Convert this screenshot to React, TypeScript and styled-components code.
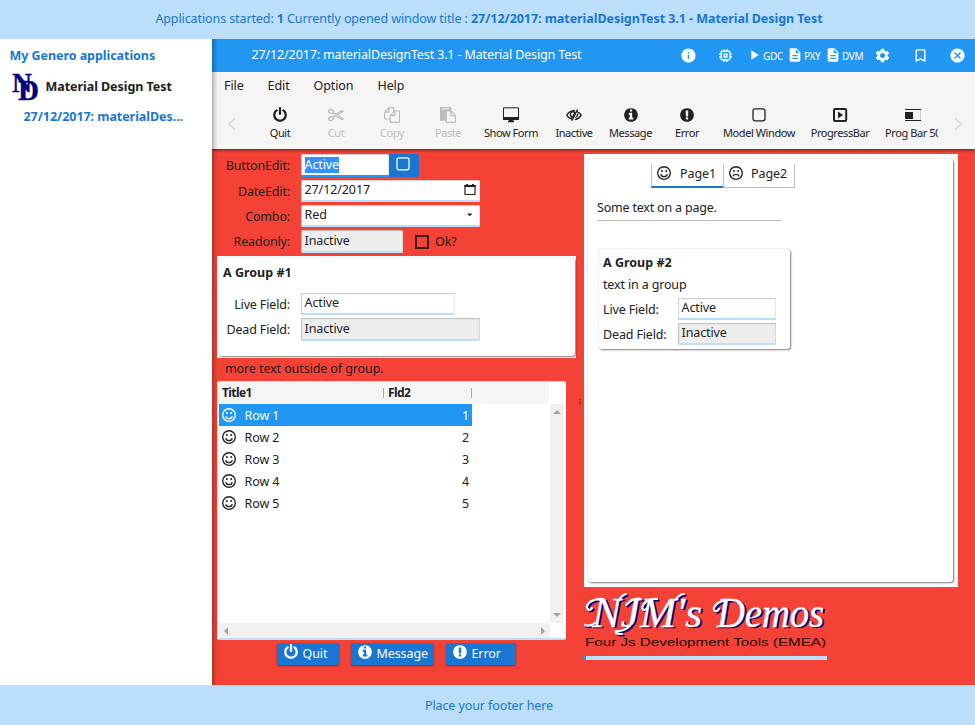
import React from 'react';
import styled, { createGlobalStyle } from 'styled-components';
import {
  MdInfo,
  MdMemory,
  MdPlayArrow,
  MdDescription,
  MdSettings,
  MdBookmarkBorder,
  MdCancel,
} from 'react-icons/md';

const GlobalStyle = createGlobalStyle`
  * { box-sizing: border-box; }
  body {
    margin: 0;
    font: 12.5px/20px "Noto Sans", sans-serif;
    letter-spacing: -0.1px;
    color: #212121;
    overflow: hidden;
  }
  svg { display: block; flex: none; overflow: visible; }
`;

const Page = styled.div`
  display: grid;
  grid-template: 39px 646px 40px / 212px 1fr;
  width: 975px;
  height: 725px;
  background: #fff;
`;

const Banner = styled.div<{ $foot?: boolean }>`
  grid-column: 1 / -1;
  display: flex;
  align-items: center;
  justify-content: center;
  padding: ${(p) => (p.$foot ? '1px 0 0 3px' : '0 0 1px 3px')};
  background: #bbdefb;
  color: #1976d2;
  white-space: pre;
  b { letter-spacing: -0.05px; }
`;

const Sidebar = styled.aside`
  padding: 7px 9.5px;
  color: #1976d2;
  font-weight: 700;
  letter-spacing: -0.05px;
  white-space: nowrap;
`;

const AppEntry = styled.div`
  display: flex;
  align-items: center;
  gap: 6px;
  height: 30px;
  margin: 6px 0 5px 2px;
  color: #212121;
`;

const AppWindow = styled.div`
  padding-left: 14px;
`;

const Main = styled.main`
  display: flex;
  flex-direction: column;
  min-width: 0;
  position: relative;
  &::before {
    content: '';
    position: absolute;
    z-index: 2;
    inset: 0 auto 0 0;
    width: 6px;
    background: linear-gradient(to right, rgba(0, 0, 0, 0.27), rgba(0, 0, 0, 0.1) 55%, transparent);
  }
`;

const TitleBar = styled.header`
  display: flex;
  align-items: center;
  height: 33px;
  flex: none;
  padding-left: 39.5px;
  background: #2196f3;
  color: #fff;
`;

const WindowTitle = styled.div`
  flex: none;
  width: 418px;
  padding-bottom: 1px;
  letter-spacing: -0.13px;
`;

const TitleAction = styled.div<{ $w: number }>`
  display: flex;
  flex: none;
  align-items: center;
  justify-content: center;
  width: ${(p) => p.$w}px;
  padding-bottom: 1px;
`;

const LogLinks = styled.div`
  display: flex;
  flex: none;
  width: 120px;
  padding-left: 2px;
`;

const LogLink = styled.div<{ $w: number }>`
  display: flex;
  align-items: center;
  gap: 1px;
  width: ${(p) => p.$w}px;
  font-size: 10px;
  letter-spacing: -0.4px;
  svg { margin-bottom: 1px; }
  span { padding-top: 1px; }
`;

const MenuBar = styled.nav`
  display: flex;
  gap: 24px;
  height: 28px;
  flex: none;
  padding: 4px 12px;
  position: relative;
  z-index: 1;
  background: #f5f5f5;
`;

const ToolBar = styled.div`
  position: relative;
  z-index: 1;
  display: flex;
  height: 49px;
  flex: none;
  background: #f5f5f5;
  box-shadow: 0 1px 3px rgba(0, 0, 0, 0.65);
  clip-path: inset(0 0 -6px 0);
`;

const Scroller = styled.div<{ $end?: boolean }>`
  display: flex;
  align-items: center;
  justify-content: center;
  width: ${(p) => (p.$end ? 37 : 40)}px;
  padding: 0 0 1px ${(p) => (p.$end ? 3 : 0)}px;
  flex: none;
  color: #dcdcdc;
`;

const Tools = styled.div`
  display: flex;
  flex: none;
  width: 686px;
  overflow: hidden;
`;

const Tool = styled.div<{ $w: number; $off?: boolean }>`
  display: flex;
  flex: none;
  flex-direction: column;
  align-items: center;
  width: ${(p) => p.$w}px;
  padding-top: 7px;
  font-size: 11px;
  line-height: 16px;
  letter-spacing: -0.42px;
  white-space: nowrap;
  color: ${(p) => (p.$off ? '#bdbdbd' : '#212121')};
  span { padding-top: 2px; }
`;

const Content = styled.section`
  display: grid;
  grid-template-columns: 359px 8px 374px;
  flex: 1;
  min-height: 0;
  padding: 5px 0 0 5px;
  background: #f44336;
`;

const Column = styled.div`
  display: flex;
  flex-direction: column;
  min-width: 0;
`;

const FormGrid = styled.div<{ $label: number; $rows: string; $top?: number }>`
  display: grid;
  grid-template-columns: ${(p) => p.$label}px 1fr;
  grid-template-rows: ${(p) => p.$rows};
  column-gap: 11px;
  row-gap: 3px;
  margin-top: ${(p) => p.$top ?? 0}px;
`;

const Label = styled.label<{ $left?: boolean }>`
  text-align: ${(p) => (p.$left ? 'left' : 'right')};
  line-height: 23px;
  letter-spacing: -0.15px;
  white-space: nowrap;
`;

const FieldLine = styled.div`
  display: flex;
`;

const Field = styled.div<{ $w: number; $off?: boolean; $focus?: boolean }>`
  display: flex;
  align-items: center;
  justify-content: space-between;
  width: ${(p) => p.$w}px;
  padding: 0 4px 0 3.5px;
  border-radius: 1px;
  background: ${(p) => (p.$off ? '#eee' : '#fff')};
  border-bottom: 2px solid ${(p) => (p.$focus ? '#2196f3' : '#bbdefb')};
  box-shadow: inset 1px 1px 1px rgba(0, 0, 0, 0.2), inset -1px 0 1px rgba(0, 0, 0, 0.1);
`;

const Selected = styled.span`
  line-height: 16px;
  background: #3390ff;
  color: #fff;
`;

const FieldButton = styled.button`
  display: flex;
  justify-content: center;
  width: 30px;
  padding: 2px 2px 0 0;
  border: 0;
  border-radius: 0 2px 2px 0;
  background: #1976d2;
  color: #fff;
`;

const CheckLabel = styled.label`
  display: flex;
  align-items: center;
  gap: 7px;
  margin-left: 13px;
`;

const CheckBox = styled.span`
  width: 12px;
  height: 12px;
  outline: 2px solid #3b1a17;
  outline-offset: -1px;
`;

const GroupFrame = styled.div`
  height: 102px;
  margin-top: 3px;
  padding: 2px 1px 2px 2px;
  background: #fff;
`;

const Card = styled.div<{ $pad: string }>`
  height: 100%;
  padding: ${(p) => p.$pad};
  border-radius: 3px;
  background: #fff;
  box-shadow: 1px 1px 2px rgba(0, 0, 0, 0.5), 0 0 1px rgba(0, 0, 0, 0.3);
`;

const Heading = styled.div`
  font-weight: 700;
  letter-spacing: 0;
`;

const OutsideText = styled.div`
  height: 23px;
  padding: 1px 8px;
`;

const Table = styled.div`
  display: grid;
  grid-template: 21px 219px 15px / 331px 14px;
  width: 349px;
  height: 259px;
  padding: 2px;
  border-bottom: 2px solid #bbdefb;
  border-radius: 2px;
  background: #fff;
  box-shadow: inset 1px 1px 1px rgba(0, 0, 0, 0.14);
`;

const HeadRow = styled.div`
  display: flex;
  margin: -1px 1px 0 -1px;
  padding-left: 4px;
  background: #f5f5f5;
  font-size: 12px;
  font-weight: 700;
  letter-spacing: -0.6px;
`;

const HeadCell = styled.div<{ $w: number }>`
  display: flex;
  align-items: center;
  justify-content: space-between;
  width: ${(p) => p.$w}px;
  &::after {
    content: '';
    width: 1px;
    height: 10px;
    background: #aaa;
  }
`;

const HeadText = styled.span`
  padding-left: 4px;
`;

const Rows = styled.div`
  grid-row: 2;
`;

const Row = styled.div<{ $on?: boolean }>`
  display: flex;
  align-items: center;
  width: 253px;
  height: 22px;
  padding: 1px 3px 0;
  background: ${(p) => (p.$on ? '#2196f3' : 'transparent')};
  color: ${(p) => (p.$on ? '#fff' : '#212121')};
  span { flex: 1; padding-left: 7.5px; }
`;

const FaceSlot = styled.div`
  margin: -1px 0 0 -1px;
`;

const ScrollTrack = styled.div<{ $dir: 'row' | 'column' }>`
  display: flex;
  flex-direction: ${(p) => p.$dir};
  align-items: center;
  justify-content: space-between;
  grid-row: ${(p) => (p.$dir === 'column' ? 2 : 3)};
  padding: ${(p) => (p.$dir === 'column' ? '4px 0' : '0 3px 0 4px')};
  background: #f0f0f0;
`;

const Actions = styled.div`
  display: flex;
  gap: 12px;
  margin: 3px 0 0 60px;
`;

const Action = styled.button<{ $w: number }>`
  display: flex;
  gap: 3.5px;
  width: ${(p) => p.$w}px;
  height: 22px;
  padding: 2px 0 0 6px;
  border: 0;
  border-radius: 2px;
  background: #1976d2;
  color: #fff;
  font: inherit;
  letter-spacing: inherit;
  line-height: 18px;
  box-shadow: 0 1px 2px rgba(0, 0, 0, 0.4);
  svg { margin-top: -1px; }
`;

const Splitter = styled.div`
  display: flex;
  align-items: flex-start;
  justify-content: center;
  padding-top: 245px;
  &::after {
    content: '';
    width: 2px;
    height: 6px;
    background: repeating-linear-gradient(#a33 0 1px, #c93a30 1px 2px);
  }
`;

const PagePanel = styled.div`
  height: 433px;
  padding: 5px 5px 5px 4px;
  background: #fff;
`;

const Tabs = styled.div`
  display: flex;
  margin-left: 54px;
`;

const Tab = styled.div<{ $on?: boolean }>`
  display: flex;
  align-items: center;
  gap: ${(p) => (p.$on ? 8 : 7)}px;
  width: 72px;
  height: 24px;
  padding: 0 0 ${(p) => (p.$on ? 2 : 3)}px 4px;
  border: 1px solid #bdbdbd;
  border-width: 0 ${(p) => (p.$on ? 0 : 1)}px 1px 1px;
  ${(p) => p.$on && 'border-bottom: 2px solid #1976d2;'}
  svg { margin-top: -2px; }
`;

const PageText = styled.div`
  width: 185px;
  height: 25px;
  margin: 8px 0 28px;
  padding-top: 2px;
  border-bottom: 1px solid #bdbdbd;
  letter-spacing: -0.2px;
`;

const GroupBox = styled.div`
  width: 191px;
  height: 100px;
  margin-left: 2px;
`;

const GroupText = styled.div`
  height: 25px;
  padding-top: 2px;
  letter-spacing: -0.15px;
`;

const Brand = styled.div`
  width: 243px;
  margin-top: 3px;
`;

const BrandRule = styled.div`
  height: 4px;
  margin-top: 6px;
  border-left: 2px solid #2196f3;
  background: #bbdefb;
`;

const POWER =
  'M1664 896q0 156-61 298t-164 245-245 164-298 61-298-61-245-164-164-245-61-298q0-182 80.5-343t226.5-270q43-32 95.5-25t83.5 50q32 42 24.5 94.5t-49.5 84.5q-98 74-151.5 181t-53.5 228q0 104 40.5 198.5t109.5 163.5 163.5 109.5 198.5 40.5 198.5-40.5 163.5-109.5 109.5-163.5 40.5-198.5q0-121-53.5-228t-151.5-181q-42-32-49.5-84.5t24.5-94.5q31-43 84-50t95 25q146 109 226.5 270t80.5 343zm-640-768v640q0 52-38 90t-90 38-90-38-38-90v-640q0-52 38-90t90-38 90 38 38 90z';
const INFO =
  'M1152 1376v-160q0-14-9-23t-23-9h-96v-512q0-14-9-23t-23-9h-320q-14 0-23 9t-9 23v160q0 14 9 23t23 9h96v320h-96q-14 0-23 9t-9 23v160q0 14 9 23t23 9h448q14 0 23-9t9-23zm-128-896v-160q0-14-9-23t-23-9h-192q-14 0-23 9t-9 23v160q0 14 9 23t23 9h192q14 0 23-9t9-23zm640 416q0 209-103 385.5t-279.5 279.5-385.5 103-385.5-103-279.5-279.5-103-385.5 103-385.5 279.5-279.5 385.5-103 385.5 103 279.5 279.5 103 385.5z';
const ALERT =
  'M896 128q209 0 385.5 103t279.5 279.5 103 385.5-103 385.5-279.5 279.5-385.5 103-385.5-103-279.5-279.5-103-385.5 103-385.5 279.5-279.5 385.5-103zm128 1247v-190q0-14-9-23.5t-22-9.5h-192q-13 0-23 10t-10 23v190q0 13 10 23t23 10h192q13 0 22-9.5t9-23.5zm-2-344l18-621q0-12-10-18-10-8-24-8h-220q-14 0-24 8-10 6-10 18l17 621q0 10 10 17.5t24 7.5h185q14 0 23.5-7.5t10.5-17.5z';
const FILES =
  'M1696 384q40 0 68 28t28 68v1216q0 40-28 68t-68 28h-960q-40 0-68-28t-28-68v-288h-544q-40 0-68-28t-28-68v-672q0-40 20-88t48-76l408-408q28-28 76-48t88-20h416q40 0 68 28t28 68v328q68-40 128-40h416zm-544 213l-299 299h299v-299zm-640-384l-299 299h299v-299zm196 647l316-316v-416h-384v416q0 40-28 68t-68 28h-416v640h512v-256q0-40 20-88t48-76zm956 804v-1152h-384v416q0 40-28 68t-68 28h-416v640h896z';
const PASTE =
  'M768 1664h896v-640h-416q-40 0-68-28t-28-68v-416h-384v1152zm256-1440v-64q0-13-9.5-22.5t-22.5-9.5h-704q-13 0-22.5 9.5t-9.5 22.5v64q0 13 9.5 22.5t22.5 9.5h704q13 0 22.5-9.5t9.5-22.5zm256 672h299l-299-299v299zm512 128v672q0 40-28 68t-68 28h-960q-40 0-68-28t-28-68v-160h-544q-40 0-68-28t-28-68v-1344q0-40 28-68t68-28h1088q40 0 68 28t28 68v328q21 13 36 28l408 408q28 28 48 76t20 88z';

const Glyph = ({ d }: { d: string }) => (
  <svg width="16" height="16" viewBox="0 0 1792 1792" fill="currentColor"><path d={d} /></svg>
);

const Line = ({ children, w = 1.3 }: { children: React.ReactNode; w?: number }) => (
  <svg width="16" height="16" viewBox="0 0 16 16" fill="none" stroke="currentColor" strokeWidth={w}>{children}</svg>
);

const Scissors = () => (
  <Line w={1.1}>
    <ellipse cx="3" cy="4.4" rx="2.5" ry="1.8" transform="rotate(20 3 4.4)" strokeWidth="1.4" />
    <ellipse cx="3" cy="11.6" rx="2.5" ry="1.8" transform="rotate(-20 3 11.6)" strokeWidth="1.4" />
    <path d="M5 5.6 9 8l6.3-3.6-1.6-.7L5 8.9M5 10.4 7.5 9M9 8l6.3 3.9-1.6.7L7.8 9.2" />
  </Line>
);
const Screen = () => (
  <Line w={1}>
    <path d="M.5.8h15v10.7H.5z" />
    <path d="M0 10h16v3H0zM6 12h4l.5 2H5.500zM5 14h6v1.300H5z" fill="currentColor" stroke="none" />
  </Line>
);
const HiddenEye = () => (
  <Line w={1.4}>
    <path d="M6.200 12.300C3.500 11.600 1.700 10 .8 8.200 2.300 5.600 5 3.700 8 3.700h1M10.500 4.300c2 .7 3.700 2.100 4.700 3.900-1.300 2.300-3.500 3.900-6.200 4.400" />
    <path d="M11.500 2.500 5.800 13.700M5 5.200C4 8 4.500 9.500 6.500 10.500L9 5.500C7 4.200 6 4.500 5 5.200" />
    <path d="M11.800 6.500c.3 2-.7 3.500-2.300 4.200z" fill="currentColor" strokeWidth=".6" />
  </Line>
);
const Square = () => <Line><rect x="2" y="1.800" width="12" height="12" rx="2" /></Line>;
const BoxedPlay = () => (
  <Line w={2}><rect x="2" y="2" width="12.200" height="12" rx="1" /><path d="M6 4.500v7L11 8z" fill="currentColor" stroke="none" /></Line>
);
const Progress = () => (
  <svg width="16" height="16" fill="#212121">
    <path d="M0 2h16v1H0zM0 13h16v1H0zM0 5h8v7H0z" /><path d="M15 3h1v10h-1z" fill="#ccc" />
  </svg>
);
const Face = ({ sad }: { sad?: boolean }) => (
  <Line w={1.35}>
    <circle cx="8" cy="8" r="6.300" />
    <circle cx="5.900" cy="6.100" r="1" fill="currentColor" stroke="none" />
    <circle cx="10.100" cy="6.100" r="1" fill="currentColor" stroke="none" />
    <path d={sad ? 'M4.900 11.300c1.200-2.500 5-2.500 6.200 0' : 'M4.700 9.200c1 3.300 5.600 3.300 6.600 0'} />
  </Line>
);
const Calendar = () => (
  <svg width="12" height="12" fill="none" stroke="#212121"><path d="M1 1.500h10v9H1z" strokeWidth="1.200" /><path d="M.5 2h11M3 0v2M9 0v2" strokeWidth="1.800" /></svg>
);
const Arrow = ({ d, fill = '#a3a3a3' }: { d: string; fill?: string }) => (
  <svg width="8" height="8" fill={fill}><path d={d} /></svg>
);
const Chevron = ({ d }: { d: string }) => (
  <svg width="10" height="14" fill="none" stroke="currentColor" strokeWidth="2"><path d={d} /></svg>
);

const Monogram = () => (
  <svg width="28" height="30" fill="#000080" stroke="#000080" strokeWidth=".3" fontFamily="Liberation Serif, serif">
    <text x="0" y="20" fontSize="28" textLength="20" lengthAdjust="spacingAndGlyphs">N</text>
    <text x="6" y="28" fontSize="30" textLength="21" lengthAdjust="spacingAndGlyphs">D</text>
  </svg>
);

const Lettering = () => (
  <>
    <text x="8" y="36.500" textLength="110" lengthAdjust="spacingAndGlyphs">NJM's</text>
    <text x="133" y="36.500" textLength="107" lengthAdjust="spacingAndGlyphs">Demos</text>
    {/* pen flourishes around the capitals */}
    <g fill="none" strokeWidth="2.200" strokeLinecap="round">
      <path d="M19 9C10 8 2 13 3 18q2 4 5 0M1 35q5 2 10-2M35 10q3-5 7-6" />
      <path d="M57 9q-8-2-15 6M46 36q-7 6-14 5-2 3 6 3" />
      <path d="M73 9q-12-1-15 9 2 4 5 0M92 9q4-5 8-5" />
      <path d="M147 10c-10-1-18 5-17 10q2 3 5-1" />
    </g>
  </>
);

const BrandLogo = () => (
  <svg width="243" height="60">
    <g fontFamily="Liberation Serif, serif" fontStyle="italic" fontSize="43">
      <g fill="#000080" stroke="#000080" strokeWidth=".3" transform="translate(1.700 1.500)"><Lettering /></g>
      <g fill="#fff" stroke="#fff" strokeWidth=".3"><Lettering /></g>
    </g>
    <text x="1" y="55.500" fontFamily="Liberation Sans, sans-serif" fontSize="10.500" letterSpacing="0" fill="#210b08" textLength="241" lengthAdjust="spacingAndGlyphs">Four Js Development Tools (EMEA)</text>
  </svg>
);

const tools: { label: string; w: number; icon: React.ReactNode; off?: boolean }[] = [
  { label: 'Quit', w: 56, icon: <Glyph d={POWER} /> },
  { label: 'Cut', w: 56, icon: <Scissors />, off: true },
  { label: 'Copy', w: 56, icon: <Glyph d={FILES} />, off: true },
  { label: 'Paste', w: 56, icon: <Glyph d={PASTE} />, off: true },
  { label: 'Show Form', w: 70, icon: <Screen /> },
  { label: 'Inactive', w: 56, icon: <HiddenEye /> },
  { label: 'Message', w: 57, icon: <Glyph d={INFO} /> },
  { label: 'Error', w: 56, icon: <Glyph d={ALERT} /> },
  { label: 'Model Window', w: 88, icon: <Square /> },
  { label: 'ProgressBar', w: 74, icon: <BoxedPlay /> },
  { label: 'Prog Bar 50', w: 72, icon: <Progress /> },
];

const title = '27/12/2017: materialDesignTest 3.1 - Material Design Test';

export default function App() {
  return (
    <Page>
      <GlobalStyle />
      <Banner>Applications started: <b>1</b> Currently opened window title : <b>{title}</b></Banner>
      <Sidebar>
        <div>My Genero applications</div>
        <AppEntry><Monogram />Material Design Test</AppEntry>
        <AppWindow>27/12/2017: materialDes...</AppWindow>
      </Sidebar>
      <Main>
        <TitleBar>
          <WindowTitle>{title}</WindowTitle>
          <TitleAction $w={37}><MdInfo size={17} /></TitleAction>
          <TitleAction $w={37.5}><MdMemory size={17} /></TitleAction>
          <LogLinks>
            <LogLink $w={41}><MdPlayArrow size={16} /><span>GDC</span></LogLink>
            <LogLink $w={38}><MdDescription size={16} /><span>PXY</span></LogLink>
            <LogLink $w={38}><MdDescription size={16} /><span>DVM</span></LogLink>
          </LogLinks>
          <TitleAction $w={37.5}><MdSettings size={17} /></TitleAction>
          <TitleAction $w={38}><MdBookmarkBorder size={17} /></TitleAction>
          <TitleAction $w={36.5}><MdCancel size={17} /></TitleAction>
        </TitleBar>
        <MenuBar><span>File</span><span>Edit</span><span>Option</span><span>Help</span></MenuBar>
        <ToolBar>
          <Scroller><Chevron d="M8 1 2 7l6 6" /></Scroller>
          <Tools>
            {tools.map((t) => (
              <Tool key={t.label} $w={t.w} $off={t.off}>{t.icon}<span>{t.label}</span></Tool>
            ))}
          </Tools>
          <Scroller $end><Chevron d="M2 1l6 6-6 6" /></Scroller>
        </ToolBar>
        <Content>
          <Column>
            <FormGrid $label={73} $rows="23px 22px 22px 23px">
              <Label>ButtonEdit:</Label>
              <FieldLine>
                <Field $w={88} $focus><Selected>Active</Selected></Field>
                <FieldButton><Square /></FieldButton>
              </FieldLine>
              <Label>DateEdit:</Label>
              <Field $w={179}>27/12/2017<Calendar /></Field>
              <Label>Combo:</Label>
              <Field $w={179}>Red<Arrow d="M-1 2.500h5.500L1.750 5.300z" fill="#212121" /></Field>
              <Label>Readonly:</Label>
              <FieldLine>
                <Field $w={102} $off>Inactive</Field>
                <CheckLabel><CheckBox />Ok?</CheckLabel>
              </FieldLine>
            </FormGrid>
            <GroupFrame>
              <Card $pad="5px 0 0 4px">
                <Heading>A Group #1</Heading>
                <FormGrid $label={67} $rows="22px 23px" $top={10}>
                  <Label>Live Field:</Label>
                  <Field $w={154}>Active</Field>
                  <Label>Dead Field:</Label>
                  <Field $w={179} $off>Inactive</Field>
                </FormGrid>
              </Card>
            </GroupFrame>
            <OutsideText>more text outside of group.</OutsideText>
            <Table>
              <HeadRow><HeadCell $w={162}>Title1</HeadCell><HeadCell $w={88}><HeadText>Fld2</HeadText></HeadCell></HeadRow>
              <Rows>
                {[1, 2, 3, 4, 5].map((n) => (
                  <Row key={n} $on={n === 1}><FaceSlot><Face /></FaceSlot><span>Row {n}</span>{n}</Row>
                ))}
              </Rows>
              <ScrollTrack $dir="column"><Arrow d="M0 6 4 2l4 4z" /><Arrow d="M0 2h8L4 6z" /></ScrollTrack>
              <ScrollTrack $dir="row"><Arrow d="M5 0v8L1 4z" /><Arrow d="M2 0v8l4-4z" /></ScrollTrack>
            </Table>
            <Actions>
              <Action $w={62}><Glyph d={POWER} />Quit</Action>
              <Action $w={83}><Glyph d={INFO} />Message</Action>
              <Action $w={70}><Glyph d={ALERT} />Error</Action>
            </Actions>
          </Column>
          <Splitter />
          <Column>
            <PagePanel>
              <Card $pad="5px 9px">
                <Tabs>
                  <Tab $on><Face />Page1</Tab>
                  <Tab><Face sad />Page2</Tab>
                </Tabs>
                <PageText>Some text on a page.</PageText>
                <GroupBox>
                  <Card $pad="4px 4px">
                    <Heading>A Group #2</Heading>
                    <GroupText>text in a group</GroupText>
                    <FormGrid $label={64} $rows="22px 22px">
                      <Label $left>Live Field:</Label>
                      <Field $w={98}>Active</Field>
                      <Label $left>Dead Field:</Label>
                      <Field $w={98} $off>Inactive</Field>
                    </FormGrid>
                  </Card>
                </GroupBox>
              </Card>
            </PagePanel>
            <Brand><BrandLogo /><BrandRule /></Brand>
          </Column>
        </Content>
      </Main>
      <Banner $foot>Place your footer here</Banner>
    </Page>
  );
}
